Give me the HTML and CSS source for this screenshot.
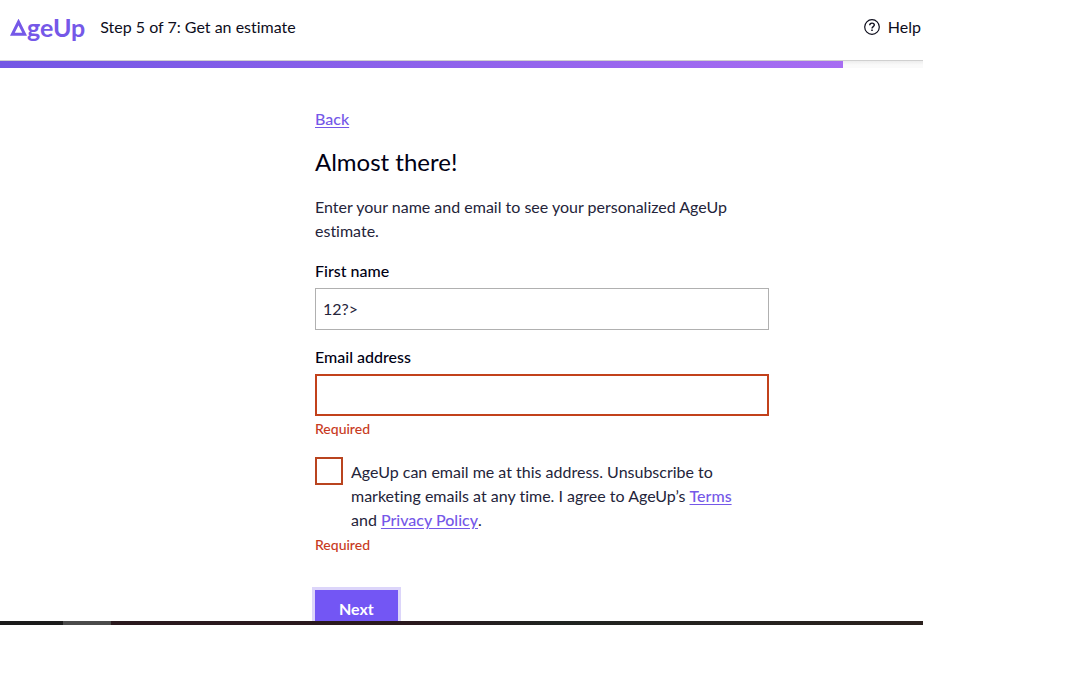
FILE: index.html
```html
<!DOCTYPE html>
<html lang="en">
<head>
<meta charset="utf-8">
<title>AgeUp – Get an estimate</title>
<link rel="stylesheet" href="styles.css">
</head>
<body>
<div class="screen">
  <header class="header">
    <div class="logo">
      <svg class="logo-mark" viewBox="0 0 17 17" aria-hidden="true"><path d="M8.5 3 14.6 15.2H2.4Z" fill="none" stroke="currentColor" stroke-width="3"/></svg><span>geUp</span>
    </div>
    <p class="step">Step 5 of 7: Get an estimate</p>
    <button class="help" type="button">
      <svg class="help-icon" viewBox="0 0 16 16" aria-hidden="true" fill="none" stroke="currentColor"><circle cx="8" cy="8" r="7.3" stroke-width="1.2"/><path d="M5.7 6.3C5.7 4.9 6.7 4.1 8 4.1S10.3 4.9 10.3 6.1C10.3 7.6 8 7.7 8 9.4" stroke-width="1.4"/><path d="M8 10.6V12.1" stroke-width="1.5"/></svg>
      <span>Help</span>
    </button>
  </header>
  <div class="progress"><div class="progress-fill"></div></div>
  <main class="content">
    <a class="link back" href="#">Back</a>
    <h1 class="title">Almost there!</h1>
    <p class="intro">Enter your name and email to see your personalized AgeUp estimate.</p>
    <form class="form">
      <label class="label" for="first-name">First name</label>
      <input class="input" id="first-name" type="text" value="12?&gt;">
      <label class="label label-next" for="email">Email address</label>
      <input class="input input-error" id="email" type="email">
      <p class="error">Required</p>
      <div class="consent">
        <input class="checkbox" id="consent" type="checkbox">
        <label class="consent-text" for="consent">AgeUp can email me at this address. Unsubscribe to<br>marketing emails at any time. I agree to AgeUp’s <a class="link" href="#">Terms</a><br>and <a class="link" href="#">Privacy Policy</a>.</label>
      </div>
      <p class="error">Required</p>
      <button class="next" type="button">Next</button>
    </form>
  </main>
  <div class="taskbar"><div class="taskbar-active"></div></div>
</div>
</body>
</html>
```
FILE: styles.css
```css
* { box-sizing: border-box; }
body {
  margin: 0;
  background: #fff;
  color: #24243a;
  font: 400 16px/24px Lato, "Open Sans", sans-serif;
  font-variant-ligatures: none;
}
p, h1 { margin: 0; }
.screen {
  display: flex;
  flex-direction: column;
  height: calc(100vh - 65px);
  margin-right: 158px;
  overflow: hidden;
}
.header {
  display: flex;
  flex: none;
  align-items: center;
  height: 60px;
  padding: 0 2px 6px 10px;
}
.logo {
  display: flex;
  align-items: center;
  color: #7558e8;
  font-size: 25px;
  font-weight: 700;
}
.logo-mark { width: 17px; height: 17px; }
.step { margin-left: 15px; color: #0d0d1c; }
.help {
  display: flex;
  align-items: center;
  gap: 8px;
  margin-left: auto;
  padding: 0;
  border: 0;
  background: none;
  color: #0d0d1c;
  font: inherit;
}
.help-icon { width: 16px; height: 16px; }
.progress {
  flex: none;
  height: 8px;
  border-top: 1px solid #d0d0d0;
  background: linear-gradient(#ededed, #fafafa 4px);
}
.progress-fill {
  width: 843px;
  max-width: 100%;
  height: 7px;
  background: linear-gradient(90deg, #7357e4, #a76df2);
}
.content {
  flex: 1;
  min-height: 0;
  width: 454px;
  margin-left: 315px;
  padding-top: 39px;
}
.link { color: #7558e8; font-weight: 500; text-decoration: underline; text-underline-offset: 2px; }
.title { margin-top: 15px; font-size: 24px; line-height: 32px; font-weight: 400; color: #000014; }
.intro { margin-top: 17px; }
.form { margin-top: 16px; }
.label { display: block; font-weight: 500; color: #000014; }
.label-next { margin-top: 15px; }
.input {
  display: block;
  width: 100%;
  height: 42px;
  margin-top: 5px;
  padding: 0 7px 2px;
  border: 1px solid #b0b0b0;
  border-radius: 0;
  background: #fff;
  color: inherit;
  font: inherit;
}
.input-error { border: 2px solid #c2411b; }
.error { margin-top: 3px; color: #c83a22; font-size: 14px; line-height: 20px; font-weight: 500; }
.consent { display: flex; gap: 8px; margin-top: 18px; }
.checkbox {
  appearance: none;
  flex: none;
  width: 28px;
  height: 28px;
  margin: 0;
  border: 2px solid #b9441f;
  background: #fff;
}
.consent-text { padding-top: 3px; white-space: nowrap; }
.next {
  display: block;
  height: 38px;
  margin-top: 35px;
  padding: 0 24px;
  border: 0;
  background: #7356f4;
  box-shadow: 0 0 0 3px #dcd5fa;
  color: #fff;
  font: inherit;
  font-weight: 700;
}
.taskbar {
  z-index: 1;
  flex: none;
  height: 4px;
  padding-left: 63px;
  background: linear-gradient(90deg, #1b1b1b, #1b1b1b 63px, #2a191e 111px, #2a191e 45%, #202421 60%, #2b211e);
}
.taskbar-active { width: 48px; height: 4px; background: #4b4b4b; }
```
